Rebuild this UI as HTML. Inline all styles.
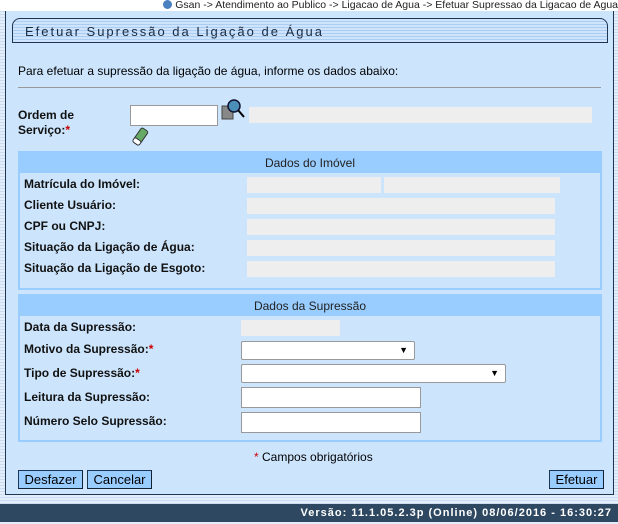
<!DOCTYPE html>
<html><head><meta charset="utf-8"><style>
body{margin:0;width:618px;height:524px;overflow:hidden;position:relative;font-family:"Liberation Sans",Arial,sans-serif;font-size:12px;color:#000;background:repeating-linear-gradient(#e4eefa 0 2px,#c9dcf2 2px 3px)}
.a{position:absolute}
.crumb{left:0;top:0;width:618px;height:11px;background:#fff;font-size:10.5px;line-height:10px;text-align:right;color:#222;white-space:nowrap}
.panel{left:5px;top:11px;width:607px;height:483px;background:#cce5fd;border:1px solid #1c3552;border-top:none}
.title{left:12px;top:18px;width:596px;height:25px;border:1px solid #1c3552;border-radius:8px 8px 0 0;background:repeating-linear-gradient(#cfe4fb 0 2px,#aacdf3 2px 3px);font-size:13px;letter-spacing:2px;line-height:25px;padding-left:12px;box-sizing:border-box;color:#1a2a40}
.hr{left:18px;top:87px;width:583px;height:1px;background:#999}
.box{border:2px solid #99ccff;box-sizing:border-box}
.hd{background:#99ccff;text-align:center;height:20px;line-height:20px;font-size:12px;color:#222}
.lb{font-weight:bold;font-size:12px;color:#111}
.g{background:#eeeeee;height:16px}
.in{background:#fff;border:1px solid #999;box-sizing:border-box;height:21px}
.r{color:#c00}
.btn{background:#99ccff;border:1px solid #1c3552;border-right-color:#123;border-bottom-color:#123;height:19px;line-height:18px;font-size:13px;text-align:center;box-sizing:border-box}
.foot{left:0;top:504px;width:618px;height:18px;background:#2e4862;color:#fff;font-weight:bold;font-size:11px;letter-spacing:1px;text-align:right;line-height:18px;padding-right:6px;box-sizing:border-box}
.sel:after{content:"▼";position:absolute;right:6px;top:3px;font-size:9px}
</style></head><body>
<div class="a crumb"><span style="display:inline-block;width:9px;height:9px;border-radius:50%;background:#4a7fc0;vertical-align:-1px"></span> Gsan -&gt; Atendimento ao Publico -&gt; Ligacao de Agua -&gt; Efetuar Supressao da Ligacao de Agua</div>
<div class="a panel"></div>
<div class="a title">Efetuar Supressão da Ligação de Água</div>
<div class="a" style="left:18px;top:64px;font-size:12px">Para efetuar a supressão da ligação de água, informe os dados abaixo:</div>
<div class="a hr"></div>
<div class="a lb" style="left:18px;top:108px;line-height:15px">Ordem de<br>Serviço:<span class="r">*</span></div>
<div class="a in" style="left:130px;top:105px;width:88px;height:21px"></div>
<svg class="a" style="left:220px;top:98px" width="26" height="24"><rect x="2" y="8" width="11" height="13" fill="#888" stroke="#444"/><circle cx="14" cy="8" r="6" fill="#4a8fb8" stroke="#113" stroke-width="1.5"/><line x1="18" y1="12" x2="24" y2="19" stroke="#000" stroke-width="2"/></svg>
<div class="a g" style="left:249px;top:107px;width:343px"></div>
<svg class="a" style="left:130px;top:127px" width="20" height="20"><g transform="rotate(35 10 10)"><rect x="6" y="1" width="8" height="15" rx="2" fill="#6a6" stroke="#333"/><rect x="6" y="13" width="8" height="5" rx="2" fill="#fff" stroke="#333"/></g></svg>

<div class="a box" style="left:18px;top:151px;width:584px;height:139px"><div class="hd">Dados do Imóvel</div></div>
<div class="a lb" style="left:24px;top:177px">Matrícula do Imóvel:</div>
<div class="a lb" style="left:24px;top:198px">Cliente Usuário:</div>
<div class="a lb" style="left:24px;top:219px">CPF ou CNPJ:</div>
<div class="a lb" style="left:24px;top:240px">Situação da Ligação de Água:</div>
<div class="a lb" style="left:24px;top:261px">Situação da Ligação de Esgoto:</div>
<div class="a g" style="left:247px;top:177px;width:134px"></div>
<div class="a g" style="left:384px;top:177px;width:176px"></div>
<div class="a g" style="left:247px;top:198px;width:308px"></div>
<div class="a g" style="left:247px;top:219px;width:308px"></div>
<div class="a g" style="left:247px;top:240px;width:308px"></div>
<div class="a g" style="left:247px;top:261px;width:308px"></div>

<div class="a box" style="left:18px;top:294px;width:584px;height:148px"><div class="hd">Dados da Supressão</div></div>
<div class="a lb" style="left:24px;top:320px">Data da Supressão:</div>
<div class="a lb" style="left:24px;top:342px">Motivo da Supressão:<span class="r">*</span></div>
<div class="a lb" style="left:24px;top:366px">Tipo de Supressão:<span class="r">*</span></div>
<div class="a lb" style="left:24px;top:390px">Leitura da Supressão:</div>
<div class="a lb" style="left:24px;top:414px">Número Selo Supressão:</div>
<div class="a g" style="left:241px;top:320px;width:99px"></div>
<div class="a in sel" style="left:241px;top:341px;width:174px;height:19px;border-radius:2px"></div>
<div class="a in sel" style="left:241px;top:364px;width:265px;height:19px;border-radius:2px"></div>
<div class="a in" style="left:241px;top:387px;width:180px"></div>
<div class="a in" style="left:241px;top:412px;width:180px"></div>

<div class="a" style="left:254px;top:450px"><span class="r">*</span> Campos obrigatórios</div>
<div class="a btn" style="left:18px;top:470px;width:65px">Desfazer</div>
<div class="a btn" style="left:87px;top:470px;width:65px">Cancelar</div>
<div class="a btn" style="left:549px;top:470px;width:55px">Efetuar</div>
<div class="a foot">Versão: 11.1.05.2.3p (Online) 08/06/2016 - 16:30:27</div>
</body></html>
